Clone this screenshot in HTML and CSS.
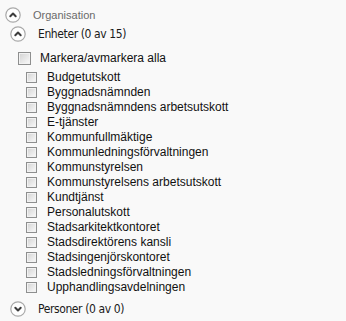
FILE: index.html
```html
<!DOCTYPE html>
<html lang="sv">
<head>
<meta charset="utf-8">
<title>Organisation</title>
<link rel="stylesheet" href="styles.css">
</head>
<body>
<div class="tree">
  <div class="head head-org">
    <svg class="toggle" width="16" height="16" viewBox="0 0 16 16"><circle cx="8" cy="8" r="7.2" fill="#fefefe" stroke="#a9a9a9" stroke-width="1.2"/><path d="M5.3 9.2 L8 6.5 L10.7 9.2" fill="none" stroke="#3c3c3c" stroke-width="2" stroke-linecap="round" stroke-linejoin="round"/></svg>
    <span class="org-label">Organisation</span>
  </div>
  <div class="head head-sub">
    <svg class="toggle" width="16" height="16" viewBox="0 0 16 16"><circle cx="8" cy="8" r="7.2" fill="#fefefe" stroke="#a9a9a9" stroke-width="1.2"/><path d="M5.3 9.2 L8 6.5 L10.7 9.2" fill="none" stroke="#3c3c3c" stroke-width="2" stroke-linecap="round" stroke-linejoin="round"/></svg>
    <span class="sub-label">Enheter (0 av 15)</span>
  </div>
  <div class="all-row">
    <span class="cb cb-big"></span>
    <span class="item-label">Markera/avmarkera alla</span>
  </div>
  <ul class="items">
    <li><span class="cb"></span><span class="item-label">Budgetutskott</span></li>
    <li><span class="cb"></span><span class="item-label">Byggnadsnämnden</span></li>
    <li><span class="cb"></span><span class="item-label">Byggnadsnämndens arbetsutskott</span></li>
    <li><span class="cb"></span><span class="item-label">E-tjänster</span></li>
    <li><span class="cb"></span><span class="item-label">Kommunfullmäktige</span></li>
    <li><span class="cb"></span><span class="item-label">Kommunledningsförvaltningen</span></li>
    <li><span class="cb"></span><span class="item-label">Kommunstyrelsen</span></li>
    <li><span class="cb"></span><span class="item-label">Kommunstyrelsens arbetsutskott</span></li>
    <li><span class="cb"></span><span class="item-label">Kundtjänst</span></li>
    <li><span class="cb"></span><span class="item-label">Personalutskott</span></li>
    <li><span class="cb"></span><span class="item-label">Stadsarkitektkontoret</span></li>
    <li><span class="cb"></span><span class="item-label">Stadsdirektörens kansli</span></li>
    <li><span class="cb"></span><span class="item-label">Stadsingenjörskontoret</span></li>
    <li><span class="cb"></span><span class="item-label">Stadsledningsförvaltningen</span></li>
    <li><span class="cb"></span><span class="item-label">Upphandlingsavdelningen</span></li>
  </ul>
  <div class="head head-sub head-last">
    <svg class="toggle" width="16" height="16" viewBox="0 0 16 16"><circle cx="8" cy="8" r="7.2" fill="#fefefe" stroke="#a9a9a9" stroke-width="1.2"/><path d="M5.3 6.8 L8 9.5 L10.7 6.8" fill="none" stroke="#3c3c3c" stroke-width="2" stroke-linecap="round" stroke-linejoin="round"/></svg>
    <span class="sub-label">Personer (0 av 0)</span>
  </div>
</div>
</body>
</html>
```

FILE: styles.css
```css
html, body {
  margin: 0;
  padding: 0;
  background: #f9f9f9;
}

.tree {
  padding: 7px 0 0 5px;
  font-family: "Liberation Sans", Arial, sans-serif;
  color: #111;
}

.head {
  display: flex;
  align-items: center;
  gap: 12px;
  height: 16px;
}

.toggle {
  flex: none;
  display: block;
}

.head-sub {
  margin-top: 3px;
  margin-left: 5px;
  gap: 12px;
}

.head-last {
  margin-top: 5px;
  height: 17px;
}

.org-label {
  font-size: 11px;
  color: #6a6a6a;
}

.sub-label {
  font-family: "DejaVu Sans Condensed", "DejaVu Sans", sans-serif;
  font-stretch: condensed;
  font-size: 12px;
  letter-spacing: -0.4px;
  color: #1a1a1a;
}

.all-row {
  display: flex;
  align-items: center;
  gap: 9px;
  height: 15px;
  margin-top: 9px;
  margin-left: 13px;
}

.item-label {
  font-size: 12px;
  line-height: 15px;
  white-space: nowrap;
}

.cb {
  flex: none;
  box-sizing: border-box;
  width: 11px;
  height: 11px;
  border: 1px solid #8e8f8f;
  box-shadow: inset 0 0 0 1px #f2f2f2;
  background: linear-gradient(135deg, #d2d2d2 0%, #e6e6e6 50%, #fafafa 100%);
}

.cb-big {
  width: 13px;
  height: 13px;
}

.items {
  list-style: none;
  margin: 4px 0 0 21px;
  padding: 0;
}

.items li {
  display: flex;
  align-items: center;
  gap: 10px;
  height: 15px;
}
```
